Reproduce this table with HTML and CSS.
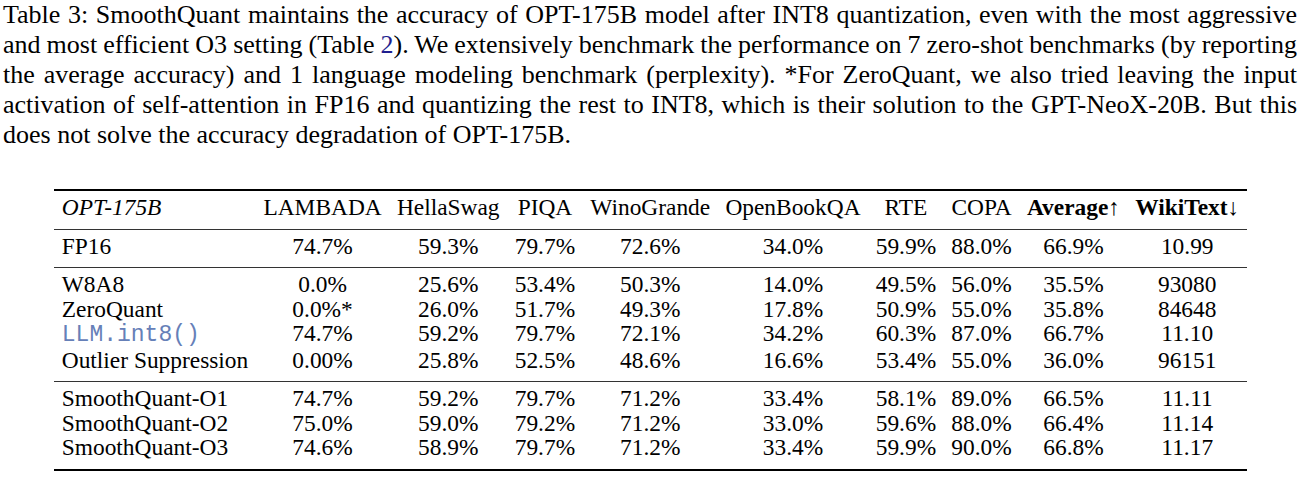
FILE: index.html
```html
<!DOCTYPE html>
<html lang="en">
<head>
<meta charset="utf-8">
<title>Table 3: SmoothQuant OPT-175B</title>
<link rel="stylesheet" href="styles.css">
</head>
<body>
<div class="caption">
  <div class="cl">Table 3: SmoothQuant maintains the accuracy of OPT-175B model after INT8 quantization, even with the most aggressive</div>
  <div class="cl">and most efficient O3 setting (Table <span class="ref">2</span>). We extensively benchmark the performance on 7 zero-shot benchmarks (by reporting</div>
  <div class="cl">the average accuracy) and 1 language modeling benchmark (perplexity). *For ZeroQuant, we also tried leaving the input</div>
  <div class="cl">activation of self-attention in FP16 and quantizing the rest to INT8, which is their solution to the GPT-NeoX-20B. But this</div>
  <div class="ll">does not solve the accuracy degradation of OPT-175B.</div>
</div>
<table class="results">
  <thead>
    <tr>
      <th class="name"><em>OPT-175B</em></th>
      <th>LAMBADA</th>
      <th>HellaSwag</th>
      <th>PIQA</th>
      <th>WinoGrande</th>
      <th>OpenBookQA</th>
      <th>RTE</th>
      <th>COPA</th>
      <th><b>Average</b><span class="arr">↑</span></th>
      <th><b>WikiText</b><span class="arr">↓</span></th>
    </tr>
  </thead>
  <tbody>
    <tr>
      <td class="name">FP16</td><td>74.7%</td><td>59.3%</td><td>79.7%</td><td>72.6%</td><td>34.0%</td><td>59.9%</td><td>88.0%</td><td>66.9%</td><td>10.99</td>
    </tr>
  </tbody>
  <tbody>
    <tr>
      <td class="name">W8A8</td><td>0.0%</td><td>25.6%</td><td>53.4%</td><td>50.3%</td><td>14.0%</td><td>49.5%</td><td>56.0%</td><td>35.5%</td><td>93080</td>
    </tr>
    <tr>
      <td class="name">ZeroQuant</td><td>0.0%*</td><td>26.0%</td><td>51.7%</td><td>49.3%</td><td>17.8%</td><td>50.9%</td><td>55.0%</td><td>35.8%</td><td>84648</td>
    </tr>
    <tr>
      <td class="name"><code class="lib">LLM.int8()</code></td><td>74.7%</td><td>59.2%</td><td>79.7%</td><td>72.1%</td><td>34.2%</td><td>60.3%</td><td>87.0%</td><td>66.7%</td><td>11.10</td>
    </tr>
    <tr>
      <td class="name">Outlier Suppression</td><td>0.00%</td><td>25.8%</td><td>52.5%</td><td>48.6%</td><td>16.6%</td><td>53.4%</td><td>55.0%</td><td>36.0%</td><td>96151</td>
    </tr>
  </tbody>
  <tbody>
    <tr>
      <td class="name">SmoothQuant-O1</td><td>74.7%</td><td>59.2%</td><td>79.7%</td><td>71.2%</td><td>33.4%</td><td>58.1%</td><td>89.0%</td><td>66.5%</td><td>11.11</td>
    </tr>
    <tr>
      <td class="name">SmoothQuant-O2</td><td>75.0%</td><td>59.0%</td><td>79.2%</td><td>71.2%</td><td>33.0%</td><td>59.6%</td><td>88.0%</td><td>66.4%</td><td>11.14</td>
    </tr>
    <tr>
      <td class="name">SmoothQuant-O3</td><td>74.6%</td><td>58.9%</td><td>79.7%</td><td>71.2%</td><td>33.4%</td><td>59.9%</td><td>90.0%</td><td>66.8%</td><td>11.17</td>
    </tr>
  </tbody>
</table>
</body>
</html>
```
FILE: styles.css
```css
html, body {
  margin: 0;
  padding: 0;
  background: #ffffff;
  color: #000000;
}

body {
  font-family: "Liberation Serif", "Times New Roman", serif;
}

.caption {
  padding: 0 4px 0 3px;
  font-size: 26px;
  line-height: 30px;
}

.caption .cl {
  white-space: nowrap;
  word-spacing: -2px;
  text-align: justify;
  text-align-last: justify;
}

.caption .ll {
  white-space: nowrap;
  text-align: left;
}

.ref {
  color: #1f1f8f;
}

.results {
  margin: 39px auto 0;
  border-collapse: collapse;
  font-size: 23.4px;
  line-height: 24.5px;
}

.results th,
.results td {
  padding: 0 7.6px;
  text-align: center;
  white-space: nowrap;
  font-weight: normal;
  vertical-align: baseline;
}

.results .name {
  text-align: left;
}

.results thead {
  border-top: 2px solid #000;
  border-bottom: 1px solid #333;
}

.results thead th {
  padding-top: 4px;
  padding-bottom: 9px;
}

.results tbody {
  border-bottom: 1px solid #333;
}

.results tbody:last-child {
  border-bottom: 2px solid #000;
}

.results tbody tr:first-child td {
  padding-top: 4px;
}

.results tbody tr:last-child td {
  padding-bottom: 9px;
}

.results b {
  font-weight: bold;
}

.results .arr {
  font-weight: normal;
}

.lib {
  font-family: "Liberation Mono", "Courier New", monospace;
  font-size: 23px;
  color: #6680b8;
}
```
